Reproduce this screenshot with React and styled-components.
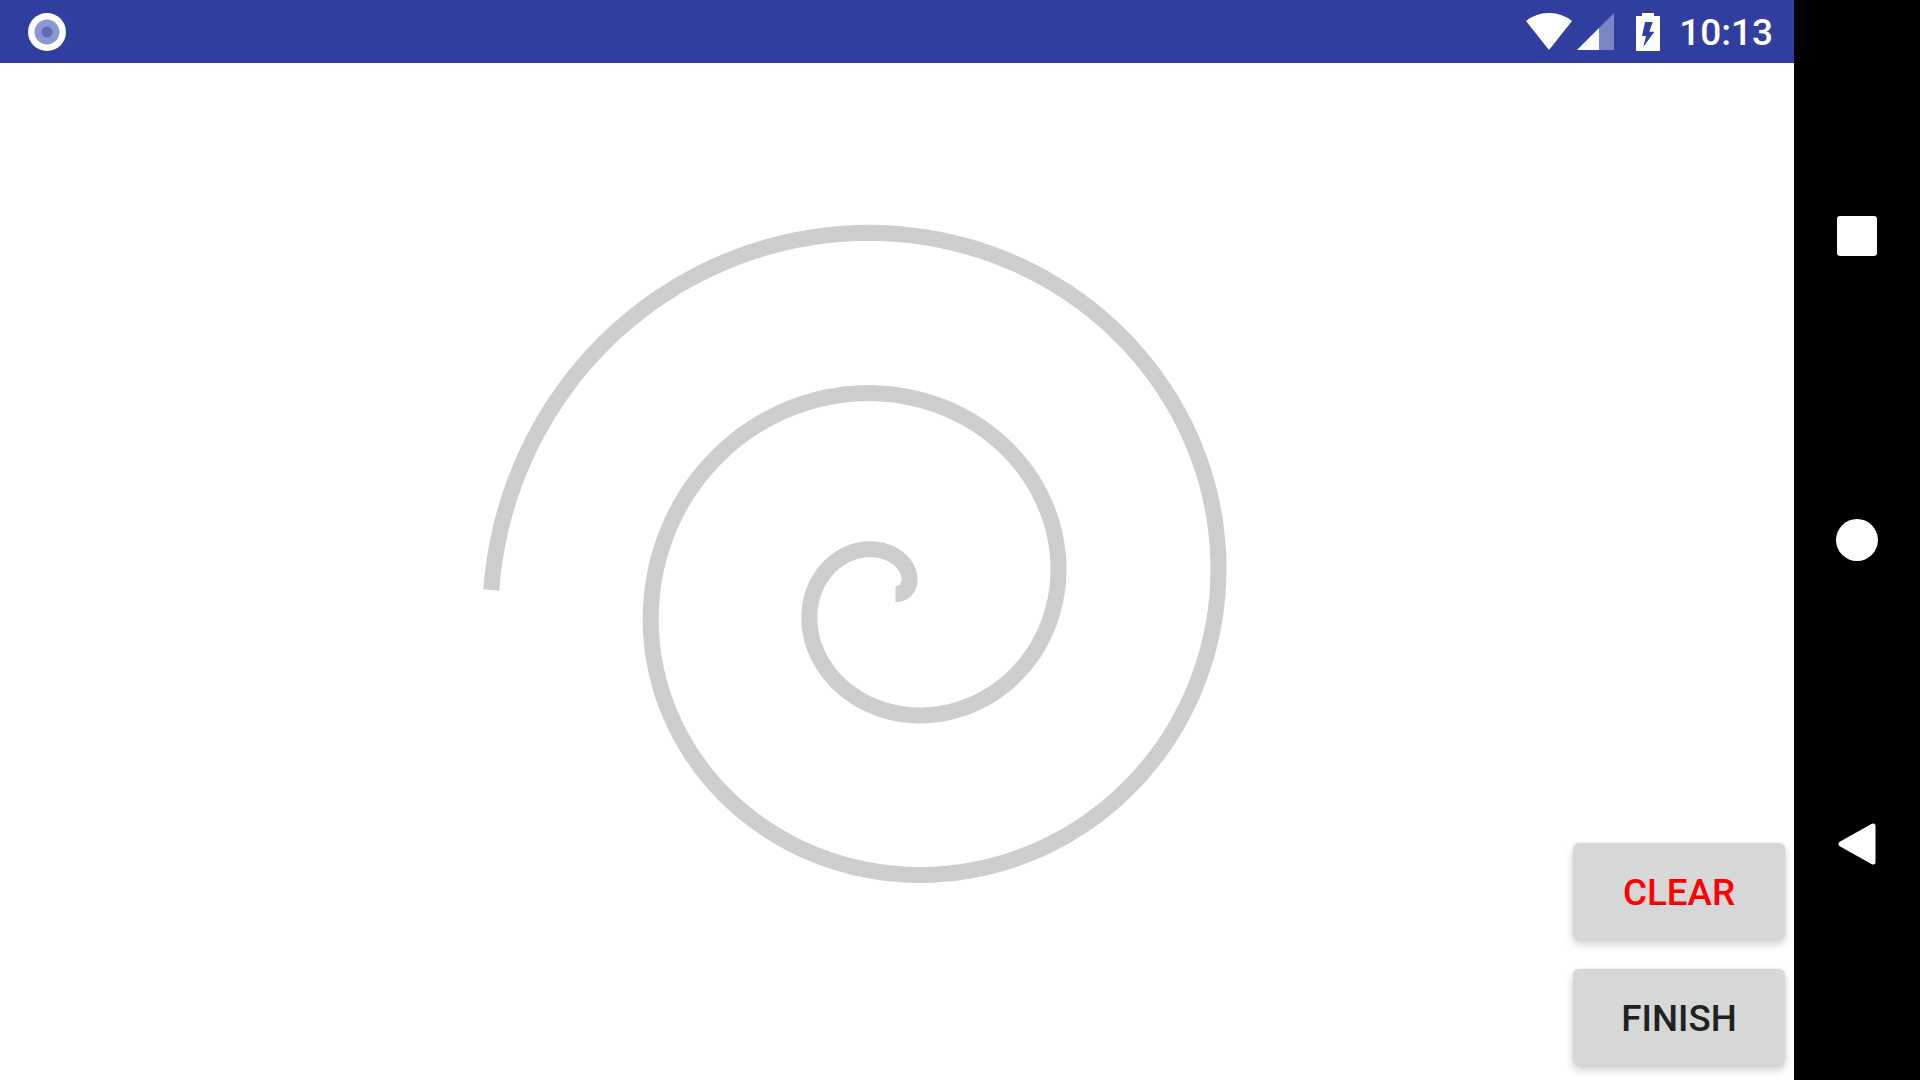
import React from 'react';
import styled, {createGlobalStyle} from 'styled-components';

const GlobalStyle = createGlobalStyle`
  html, body {
    margin: 0;
    padding: 0;
    height: 100%;
    background: #000;
    overflow: hidden;
  }
  #root {
    height: 100%;
  }
`

const PageDiv = styled.div`
  display: flex;
  width: 1920px;
  height: 1080px;
  font-family: Roboto, "Liberation Sans", sans-serif;
`

const ScreenDiv = styled.div`
  flex: 1;
  display: flex;
  flex-direction: column;
  min-width: 0;
`

const StatusBar = styled.div`
  flex: 0 0 63px;
  display: flex;
  align-items: center;
  background: #303f9f;
  padding-left: 28px;
  padding-right: 21px;
`

const RecordIcon = styled.svg`
  width: 38px;
  height: 38px;
  display: block;
`

const StatusIcons = styled.div`
  margin-left: auto;
  display: flex;
  align-items: center;
`

const StatusIcon = styled.svg`
  display: block;
  margin-left: ${props => props.$gap}px;
`

const Clock = styled.span`
  margin-left: 19px;
  padding-top: 3px;
  color: #fff;
  font-size: 37px;
  font-weight: 500;
  line-height: 60px;
`

const CanvasDiv = styled.main`
  flex: 1;
  position: relative;
  background: #fff;
`

const SpiralSvg = styled.svg`
  display: block;
  width: 1794px;
  height: 1017px;
`

const ButtonStack = styled.div`
  position: absolute;
  right: 9px;
  bottom: 15px;
  display: flex;
  flex-direction: column;
  gap: 30px;
`

const ActionButton = styled.button`
  width: 212px;
  height: 96px;
  border: 0;
  border-radius: 6px;
  padding: 2px 0 0;
  background: #d6d7d7;
  color: ${props => props.$danger ? '#ff0000' : '#212121'};
  font-family: inherit;
  font-size: 36.75px;
  font-weight: 500;
  box-shadow: 0 5px 8px rgba(0, 0, 0, 0.2), 0 0 2px rgba(0, 0, 0, 0.1);
`

const NavBar = styled.nav`
  flex: 0 0 126px;
  display: flex;
  flex-direction: column;
  align-items: center;
  justify-content: space-between;
  background: #000;
  padding: 216px 0 215px;
  box-sizing: border-box;
`

const NavIcon = styled.svg`
  display: block;
`

// archimedean spiral, 161px between the rings, a bit flatter in y than in x
const spiralPoints = () => {
    const cx = 894.5;
    const cy = 594 - 63;
    const end = 5 * Math.PI - 0.01;
    const points = [];
    for (let i = 0; i <= 400; i++) {
        const t = (end * i) / 400;
        const r = (161 / (2 * Math.PI)) * t;
        points.push(`${(cx + (r + 1) * Math.cos(t)).toFixed(1)},${(cy - (r - 2) * Math.sin(t)).toFixed(1)}`);
    }
    return points.join(' ');
}

export default function App() {
    return (
        <PageDiv>
            <GlobalStyle/>
            <ScreenDiv>
                <StatusBar>
                    <RecordIcon viewBox="0 0 38 38">
                        <circle cx="19" cy="19" r="19" fill="#fff"/>
                        <circle cx="19" cy="19" r="12.5" fill="#8c97d0"/>
                        <circle cx="19" cy="19" r="5.5" fill="#5c6bb8"/>
                    </RecordIcon>
                    <StatusIcons>
                        <StatusIcon $gap={0} width="46" height="37" viewBox="0 0 46 37">
                            <path d="M23 37 L0 8 A37 37 0 0 1 46 8 Z" fill="#fff"/>
                        </StatusIcon>
                        <StatusIcon $gap={5} width="37" height="37" viewBox="0 0 37 37">
                            <path d="M0 37 L22 15 L22 37 Z" fill="#fff"/>
                            <path d="M22 15 L37 0 L37 37 L22 37 Z" fill="#7a86c2"/>
                        </StatusIcon>
                        <StatusIcon $gap={22} width="24" height="38" viewBox="0 0 24 38">
                            <path d="M6 0 H18 V3 H24 V38 H0 V3 H6 Z" fill="#fff"/>
                            <path d="M9 9 L16.7 9 L13.3 18.7 L18.3 18.7 L7.3 34 L10 23 L6 23 Z" fill="#303f9f"/>
                        </StatusIcon>
                        <Clock>10:13</Clock>
                    </StatusIcons>
                </StatusBar>
                <CanvasDiv>
                    <SpiralSvg viewBox="0 0 1794 1017">
                        <polyline
                            points={spiralPoints()}
                            fill="none"
                            stroke="#cdcdcd"
                            strokeWidth="16"
                            strokeLinejoin="round"
                        />
                    </SpiralSvg>
                    <ButtonStack>
                        <ActionButton $danger>CLEAR</ActionButton>
                        <ActionButton>FINISH</ActionButton>
                    </ButtonStack>
                </CanvasDiv>
            </ScreenDiv>
            <NavBar>
                <NavIcon width="40" height="40" viewBox="0 0 40 40">
                    <rect width="40" height="40" rx="3" fill="#fff"/>
                </NavIcon>
                <NavIcon width="42" height="42" viewBox="0 0 42 42">
                    <circle cx="21" cy="21" r="21" fill="#fff"/>
                </NavIcon>
                <NavIcon width="38" height="42" viewBox="0 0 38 42">
                    <path d="M35 3 V39 L3 21 Z" fill="#fff" stroke="#fff" strokeWidth="5" strokeLinejoin="round"/>
                </NavIcon>
            </NavBar>
        </PageDiv>
    )
}
